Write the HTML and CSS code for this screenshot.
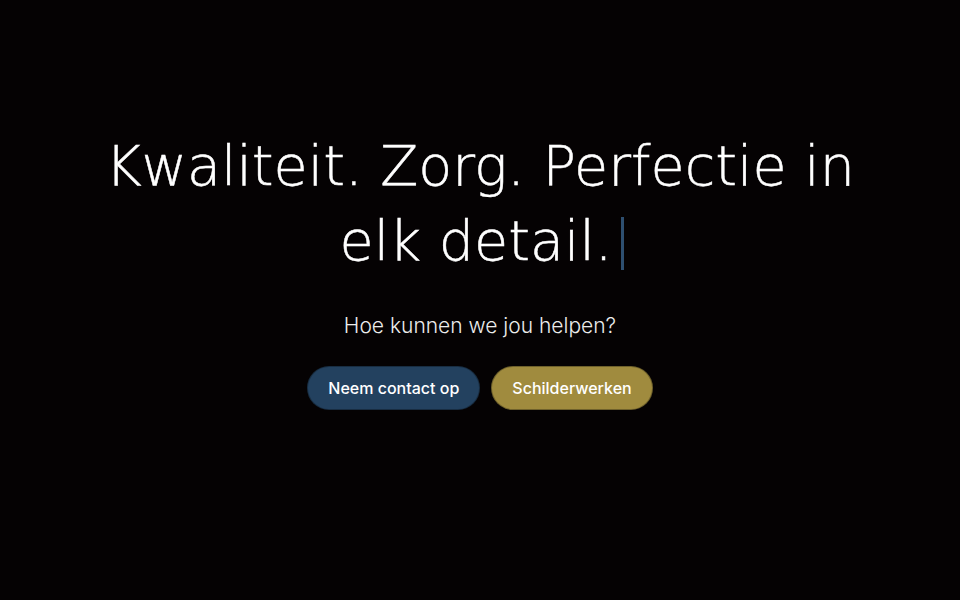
FILE: index.html
```html
<!DOCTYPE html>
<html lang="nl">
<head>
<meta charset="utf-8">
<title>Kwaliteit</title>
<link rel="stylesheet" href="styles.css">
</head>
<body>
<main class="hero">
  <h1 class="title">Kwaliteit. Zorg. Perfectie in elk detail.<span class="cursor"></span></h1>
  <p class="sub">Hoe kunnen we jou helpen?</p>
  <div class="actions">
    <a class="btn btn-blue" href="#">Neem contact op</a>
    <a class="btn btn-gold" href="#">Schilderwerken</a>
  </div>
</main>
</body>
</html>
```
FILE: styles.css
```css
html, body {
  margin: 0;
  padding: 0;
  background: #050203;
  height: 100%;
}
.hero {
  height: 600px;
  display: flex;
  flex-direction: column;
  align-items: center;
  box-sizing: border-box;
  padding-top: 128px;
}
.title {
  margin: 0;
  width: 780px;
  text-align: center;
  font-family: "DejaVu Sans", sans-serif;
  font-weight: 200;
  font-size: 55.5px;
  line-height: 75px;
  color: #ffffff;
  -webkit-text-stroke: 0.5px #ffffff;
}
.cursor {
  display: inline-block;
  width: 3px;
  height: 53px;
  background: #2e4f70;
  margin-left: 9px;
  margin-right: -4px;
  vertical-align: -10px;
}
.sub {
  margin: 34px 0 0;
  font-family: Inter, sans-serif;
  font-weight: 300;
  font-size: 21px;
  line-height: 28px;
  color: #ececec;
}
.actions {
  display: flex;
  gap: 11px;
  margin-top: 26px;
}
.btn {
  display: flex;
  align-items: center;
  height: 44px;
  box-sizing: border-box;
  padding: 0 20px;
  border-radius: 22px;
  font-family: Inter, sans-serif;
  font-weight: 500;
  font-size: 16px;
  color: #ffffff;
  text-decoration: none;
  border: 1px solid rgba(0,0,0,0.3);
}
.btn-blue { background: #23415f; }
.btn-gold { background: #a08b3e; }
```
